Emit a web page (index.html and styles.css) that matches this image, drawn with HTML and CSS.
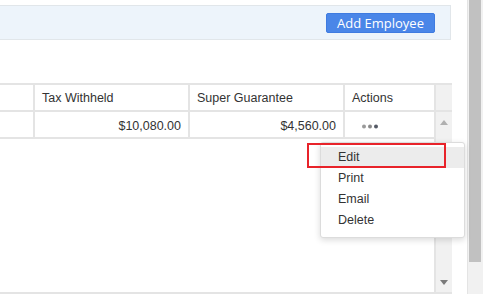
FILE: index.html
```html
<!DOCTYPE html>
<html>
<head>
<meta charset="utf-8">
<link rel="stylesheet" href="styles.css">
</head>
<body>
<div class="page">
  <div class="main">
    <div class="toolbar">
      <button class="btn-add">Add Employee</button>
    </div>
    <div class="grid">
      <div class="cell head"></div>
      <div class="cell head">Tax Withheld</div>
      <div class="cell head">Super Guarantee</div>
      <div class="cell head">Actions</div>
      <div class="corner"></div>
      <div class="cell"></div>
      <div class="cell num">$10,080.00</div>
      <div class="cell num">$4,560.00</div>
      <div class="cell act">
        <svg class="dots" width="16" height="5" viewBox="0 0 16 5"><circle cx="2" cy="2.5" r="2" fill="#9a9a9a"/><circle cx="8" cy="2.5" r="2" fill="#8a8a8a"/><circle cx="14" cy="2.5" r="2" fill="#555a66"/></svg>
      </div>
      <div class="tscroll">
        <svg width="8" height="5" viewBox="0 0 8 5"><path d="M0 5 L4 0 L8 5 Z" fill="#b0b0b0"/></svg>
        <svg width="8" height="5" viewBox="0 0 8 5"><path d="M0 0 L8 0 L4 5 Z" fill="#7a7a7a"/></svg>
      </div>
      <div class="filler"></div>
    </div>
  </div>
  <div class="vscroll"><div class="thumb"></div></div>
</div>
<div class="menu">
  <div class="item active">Edit</div>
  <div class="item">Print</div>
  <div class="item">Email</div>
  <div class="item">Delete</div>
</div>
<div class="mark"></div>
</body>
</html>
```
FILE: styles.css
```css
html, body {
  margin: 0;
  padding: 0;
  background: #fff;
  font-family: "Liberation Sans", Arial, sans-serif;
  overflow: hidden;
}
.page {
  display: flex;
  width: 483px;
  height: 294px;
}
.main {
  width: 467px;
  padding-top: 5px;
  display: flex;
  flex-direction: column;
  box-sizing: border-box;
}
.toolbar {
  width: 451px;
  height: 35px;
  box-sizing: border-box;
  background: #edf4fb;
  border: 1px solid #e1e6ea;
  border-left: none;
  display: flex;
  justify-content: flex-end;
  align-items: flex-start;
  padding: 7px 15px 0 0;
}
.btn-add {
  width: 109px;
  height: 20px;
  background: #4a86e8;
  border: 1px solid #3f7be0;
  border-radius: 2px;
  color: #fff;
  font-family: "Open Sans", "Noto Sans", sans-serif;
  font-size: 13px;
  padding: 0;
  line-height: 17px;
}
.grid {
  margin-top: 43px;
  width: 452px;
  flex: 1;
  display: grid;
  grid-template-columns: 33px 153px 153px 89px 16px;
  grid-template-rows: 25px 25px 1fr;
  gap: 2px;
  padding: 2px 0;
  background: #e4e4e4;
  font-size: 12.5px;
  color: #333;
}
.cell {
  background: #fff;
  display: flex;
  align-items: center;
  padding: 0 7px;
}
.head { padding-top: 0; }
.num { justify-content: flex-end; padding-top: 2px; }
.act { padding-left: 17px; padding-top: 3px; }
.corner { background: #f1f1f1; }
.tscroll {
  grid-column: 5;
  grid-row: 2 / 4;
  background: #f1f1f1;
  display: flex;
  flex-direction: column;
  justify-content: space-between;
  align-items: center;
  padding: 8px 0 7px;
}
.filler {
  grid-column: 1 / 5;
  grid-row: 3;
  background: #fff;
}
.vscroll {
  width: 16px;
  background: #f1f1f1;
  border-left: 1px solid #e4e4e4;
  box-sizing: border-box;
  padding-left: 1px;
}
.thumb {
  width: 12px;
  height: 262px;
  background: #c1c1c1;
}
.menu {
  position: absolute;
  left: 320px;
  top: 142px;
  width: 145px;
  box-sizing: border-box;
  background: #fff;
  border: 1px solid #dcdcdc;
  border-radius: 3px;
  box-shadow: 0 2px 6px rgba(0,0,0,0.15);
  padding: 4px 0 6px;
  font-size: 12.5px;
  color: #333;
}
.item {
  height: 21px;
  line-height: 21px;
  padding-left: 17px;
}
.item.active { background: #ececec; }
.mark {
  position: absolute;
  left: 307px;
  top: 143px;
  width: 139px;
  height: 25px;
  box-sizing: border-box;
  border: 2px solid #e8232a;
}
```
